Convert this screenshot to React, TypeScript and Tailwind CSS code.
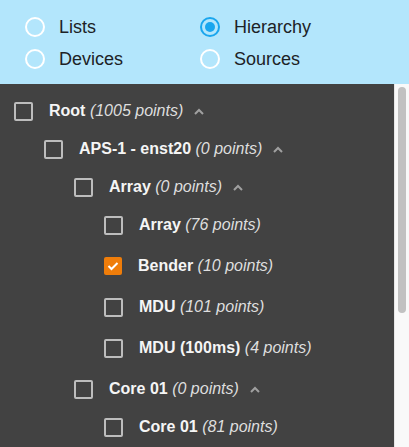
import React from "react";

type Node = { label: string; points: number; level: number; parent: boolean; checked?: boolean };

const nodes: Node[] = [
  { label: "Root", points: 1005, level: 0, parent: true },
  { label: "APS-1 - enst20", points: 0, level: 1, parent: true },
  { label: "Array", points: 0, level: 2, parent: true },
  { label: "Array", points: 76, level: 3, parent: false },
  { label: "Bender", points: 10, level: 3, parent: false, checked: true },
  { label: "MDU", points: 101, level: 3, parent: false },
  { label: "MDU (100ms)", points: 4, level: 3, parent: false },
  { label: "Core 01", points: 0, level: 2, parent: true },
  { label: "Core 01", points: 81, level: 3, parent: false },
];

const padMap = ["pl-[14px]", "pl-[44px]", "pl-[74px]", "pl-[104px]"];

function Radio({ checked, label }: { checked?: boolean; label: string }) {
  return (
    <div className="flex items-center h-[32px]">
      {checked ? (
        <div className="w-[20px] h-[20px] rounded-full border-2 border-[#1aa6ee] flex items-center justify-center">
          <div className="w-[10px] h-[10px] rounded-full bg-[#1aa6ee]" />
        </div>
      ) : (
        <div className="w-[20px] h-[20px] rounded-full border-2 border-white" />
      )}
      <span className="ml-[14px] text-[18px] text-[#1d2226]">{label}</span>
    </div>
  );
}

function Chevron() {
  return (
    <svg width="10" height="7" viewBox="0 0 10 7" className="ml-[11px] mt-[1px]">
      <path d="M1 6 L5 2 L9 6" fill="none" stroke="#a0a0a0" strokeWidth="2" />
    </svg>
  );
}

export default function App() {
  return (
    <div
      className="w-[409px] h-[447px] overflow-hidden flex flex-col"
      style={{ fontFamily: '"Liberation Sans", Arial, sans-serif' }}
    >
      <div className="h-[84px] bg-[#b3e6fc] flex pt-[11px] pl-[25px] shrink-0">
        <div className="w-[175px] flex flex-col">
          <Radio label="Lists" />
          <Radio label="Devices" />
        </div>
        <div className="flex flex-col">
          <Radio label="Hierarchy" checked />
          <Radio label="Sources" />
        </div>
      </div>
      <div className="flex-1 flex bg-[#424242] min-h-0">
        <div className="flex-1 flex flex-col pt-[8px]">
          {nodes.map((n, i) => (
            <div
              key={i}
              className={`h-[38px] shrink-0 flex items-center ${padMap[n.level]} ${n.parent ? "" : "mb-[3px]"}`}
            >
              {n.checked ? (
                <div className="w-[18px] h-[18px] rounded-[2px] bg-[#ef7d0a] flex items-center justify-center">
                  <svg width="12" height="10" viewBox="0 0 12 10">
                    <path d="M1.5 5 L4.5 8 L10.5 2" fill="none" stroke="white" strokeWidth="2" />
                  </svg>
                </div>
              ) : (
                <div className="w-[19px] h-[19px] rounded-[2px] border-2 border-[#bdbdbd]" />
              )}
              <span className="ml-[16px] text-[16px] text-[#f5f5f5] whitespace-nowrap">
                <span className="font-bold">{n.label}</span>{" "}
                <span className="italic text-[#dedede]">({n.points} points)</span>
              </span>
              {n.parent && <Chevron />}
            </div>
          ))}
        </div>
        <div className="w-[15px] shrink-0 bg-[#f9f9f9] border-l border-[#e6e6e6] pt-[3px] pl-[3px]">
          <div className="w-[8px] h-[226px] rounded-full bg-[#c1c1c1]" />
        </div>
      </div>
    </div>
  );
}
